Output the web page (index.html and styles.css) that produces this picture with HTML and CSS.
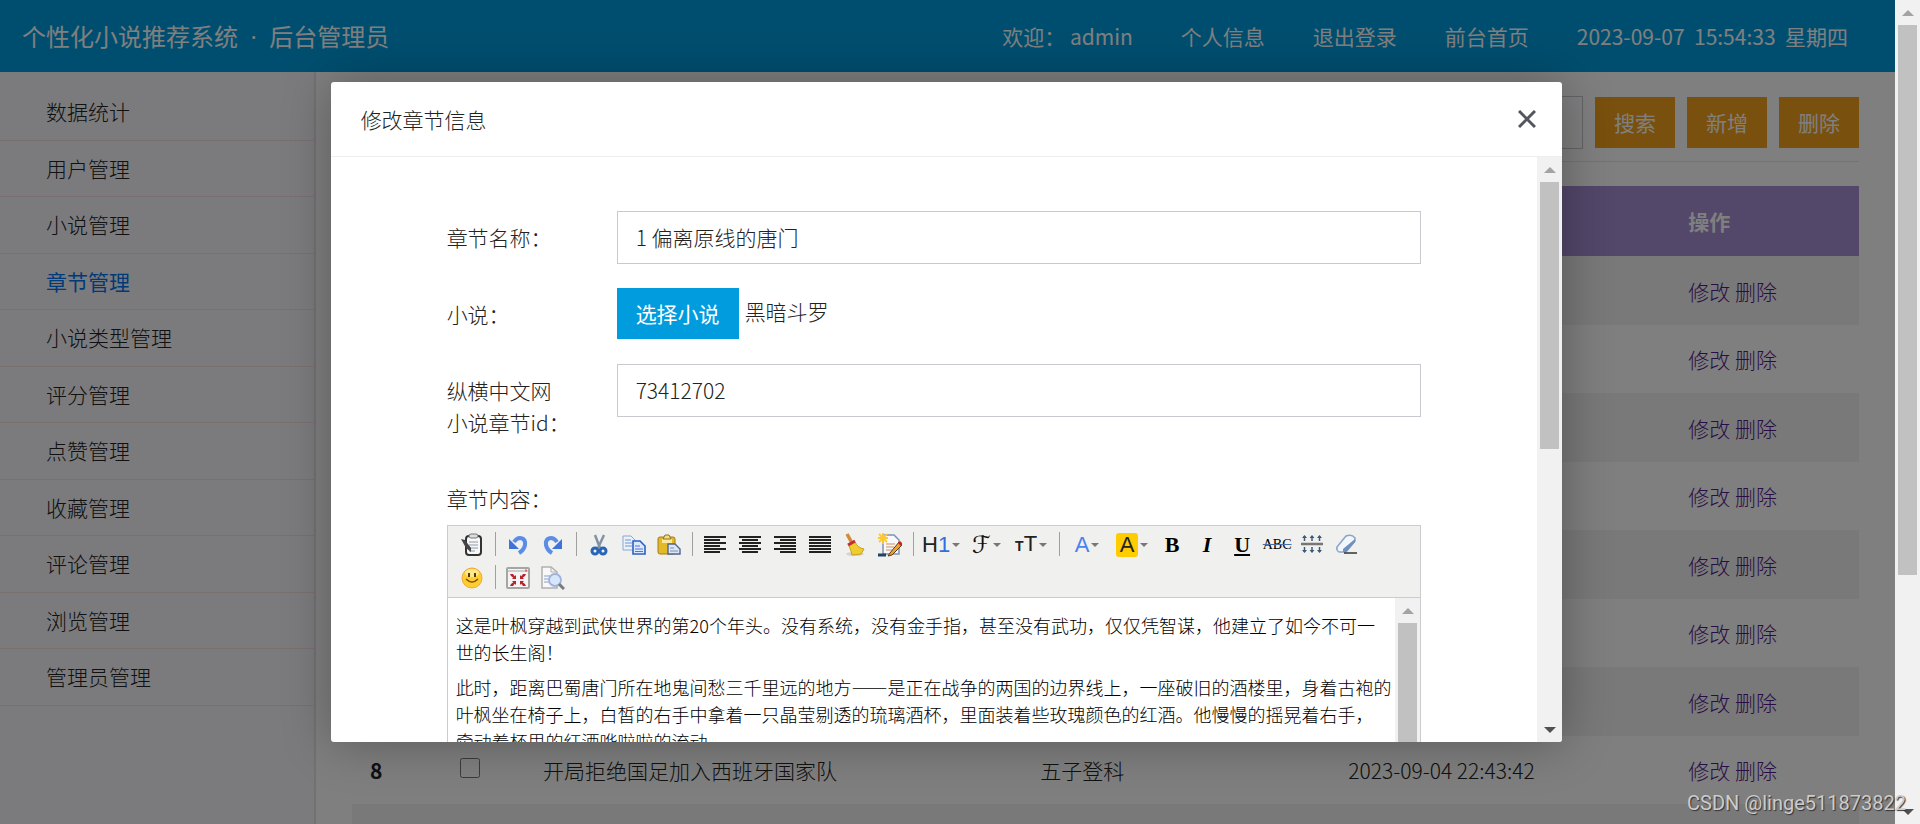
FILE: index.html
```html
<!DOCTYPE html>
<html lang="zh-CN">
<head>
<meta charset="utf-8">
<title>后台管理员</title>
<link rel="stylesheet" href="styles.css">
</head>
<body>
<div class="page">
  <header class="topbar">
    <div class="brand">个性化小说推荐系统<span class="dot">&nbsp;&nbsp;·&nbsp;&nbsp;</span>后台管理员</div>
    <nav class="topnav">
      <span>欢迎：&nbsp;admin</span>
      <a href="#">个人信息</a>
      <a href="#">退出登录</a>
      <a href="#">前台首页</a>
      <span>2023-09-07 &nbsp;15:54:33 &nbsp;星期四</span>
    </nav>
  </header>
  <div class="body">
    <nav class="side">
      <a href="#">数据统计</a>
      <a href="#">用户管理</a>
      <a href="#">小说管理</a>
      <a href="#" class="active">章节管理</a>
      <a href="#">小说类型管理</a>
      <a href="#">评分管理</a>
      <a href="#">点赞管理</a>
      <a href="#">收藏管理</a>
      <a href="#">评论管理</a>
      <a href="#">浏览管理</a>
      <a href="#">管理员管理</a>
    </nav>
    <main class="main">
      <div class="tools">
        <input class="field" type="text" aria-label="搜索">
        <button class="btn" type="button">搜索</button>
        <button class="btn" type="button">新增</button>
        <button class="btn" type="button">删除</button>
      </div>
      <table class="list">
        <colgroup><col class="c-no"><col class="c-check"><col class="c-name"><col class="c-novel"><col class="c-date"><col class="c-ops"></colgroup>
        <thead><tr><th></th><th></th><th></th><th></th><th></th><th>操作</th></tr></thead>
        <tbody>
          <tr><td></td><td></td><td></td><td></td><td></td><td><a href="#">修改</a> <a href="#">删除</a></td></tr>
          <tr><td></td><td></td><td></td><td></td><td></td><td><a href="#">修改</a> <a href="#">删除</a></td></tr>
          <tr><td></td><td></td><td></td><td></td><td></td><td><a href="#">修改</a> <a href="#">删除</a></td></tr>
          <tr><td></td><td></td><td></td><td></td><td></td><td><a href="#">修改</a> <a href="#">删除</a></td></tr>
          <tr><td></td><td></td><td></td><td></td><td></td><td><a href="#">修改</a> <a href="#">删除</a></td></tr>
          <tr><td></td><td></td><td></td><td></td><td></td><td><a href="#">修改</a> <a href="#">删除</a></td></tr>
          <tr><td></td><td></td><td></td><td></td><td></td><td><a href="#">修改</a> <a href="#">删除</a></td></tr>
          <tr><th scope="row">8</th><td><input type="checkbox" aria-label="8"></td><td>开局拒绝国足加入西班牙国家队</td><td>五子登科</td><td>2023-09-04 22:43:42</td><td><a href="#">修改</a> <a href="#">删除</a></td></tr>
          <tr><td></td><td></td><td></td><td></td><td></td><td></td></tr>
        </tbody>
      </table>
    </main>
  </div>
  <div class="shade"></div>
  <section class="modal" role="dialog" aria-labelledby="dialog-title">
    <div class="modal-head">
      <h2 id="dialog-title">修改章节信息</h2>
      <button type="button" class="close" aria-label="关闭"><svg width="18" height="18" viewBox="0 0 18 18"><path d="M1 1L17 17M17 1L1 17" stroke="#55555f" stroke-width="3"/></svg></button>
    </div>
    <div class="modal-body">
      <form class="form">
        <div class="row"><label for="name">章节名称：</label><input class="field" id="name" type="text" value="1 偏离原线的唐门"></div>
        <div class="row"><label for="pick">小说：</label><div class="pick"><button class="btn blue" id="pick" type="button">选择小说</button><span>黑暗斗罗</span></div></div>
        <div class="row"><label for="cid">纵横中文网小说章节id：</label><input class="field" id="cid" type="text" value="73412702"></div>
        <div class="content-label">章节内容：</div>
        <div class="editor">
          <div class="bar">
            <button type="button" class="ic" aria-label="模板"><svg viewBox="0 0 24 24"><rect x="6" y="3" width="15" height="19" rx="3" fill="#f8f8f8" stroke="#333" stroke-width="2"/><rect x="9" y="1" width="9" height="4" rx="2" fill="#ddd" stroke="#777"/><path d="M9 9h9M9 12h9M9 15h9M9 18h6" stroke="#8a9aaa"/><path d="M1 6l4 1 6 8v4l-5-4z" fill="#444"/></svg></button>
            <i class="sep"></i>
            <button type="button" class="ic" aria-label="后退"><svg viewBox="0 0 24 24"><path d="M8 9C12 3 20 4 19 12Q18 17 13 20" fill="none" stroke="#5b8ce6" stroke-width="4"/><path d="M3 6v10h10z" fill="#3f73dc"/></svg></button>
            <button type="button" class="ic" aria-label="前进"><svg viewBox="0 0 24 24"><path d="M16 9C12 3 4 4 5 12Q6 17 11 20" fill="none" stroke="#5b8ce6" stroke-width="4"/><path d="M21 6v10H11z" fill="#3f73dc"/></svg></button>
            <i class="sep"></i>
            <button type="button" class="ic" aria-label="剪切"><svg viewBox="0 0 24 24"><path d="M8 2l5 13M17 2l-6 13" stroke="#8293a5" stroke-width="2.5"/><circle cx="8" cy="18" r="3" fill="none" stroke="#2866b5" stroke-width="3"/><circle cx="16" cy="18" r="3" fill="none" stroke="#2866b5" stroke-width="3"/></svg></button>
            <button type="button" class="ic" aria-label="复制"><svg viewBox="0 0 24 24"><path d="M1 3h8l4 4v10H1z" fill="#eaf1fb" stroke="#8aa6d6"/><path d="M3 7h6M3 10h7M3 13h7" stroke="#6c94d8"/><path d="M11 8h7l5 5v8H11z" fill="#dce8ff" stroke="#2c5fc4" stroke-width="1.6"/><path d="M13 13h5M13 16h8M13 18.500h8" stroke="#4679d8"/></svg></button>
            <button type="button" class="ic" aria-label="粘贴"><svg viewBox="0 0 24 24"><rect x="1" y="4" width="17" height="17" rx="2" fill="#e3b928" stroke="#a57c12"/><rect x="5" y="6" width="10" height="4" fill="#f8e8a0"/><path d="M6 6l2-4h4l2 4z" fill="#f5de82" stroke="#8a701c"/><path d="M11 11h7l5 5v5H11z" fill="#dde5f2" stroke="#50668c" stroke-width="1.4"/><path d="M13 15h4M13 18h8" stroke="#7a91b8"/></svg></button>
            <i class="sep"></i>
            <button type="button" class="ic" aria-label="左对齐"><svg viewBox="0 0 24 24"><path d="M1 4h22M1 7h16M1 10h22M1 13h16M1 16h22M1 19h16" stroke="#222" stroke-width="1.8"/></svg></button>
            <button type="button" class="ic" aria-label="居中"><svg viewBox="0 0 24 24"><path d="M1 4h22M4 7h16M1 10h22M4 13h16M1 16h22M4 19h16" stroke="#222" stroke-width="1.8"/></svg></button>
            <button type="button" class="ic" aria-label="右对齐"><svg viewBox="0 0 24 24"><path d="M1 4h22M7 7h16M1 10h22M7 13h16M1 16h22M7 19h16" stroke="#222" stroke-width="1.8"/></svg></button>
            <button type="button" class="ic" aria-label="两端对齐"><svg viewBox="0 0 24 24"><path d="M1 4h22M1 7h22M1 10h22M1 13h22M1 16h22M1 19h22" stroke="#222" stroke-width="1.8"/></svg></button>
            <button type="button" class="ic" aria-label="清理"><svg viewBox="0 0 24 24"><ellipse cx="12" cy="21" rx="9" ry="2" fill="#d4d4d2"/><path d="M4 1l5 9" stroke="#d48a3c" stroke-width="3.500"/><path d="M6 13l6-4q3 6 9 7l-3 5-9 1q-1-5-3-9z" fill="#f0cd2f" stroke="#c9a11c"/><path d="M5 12l7-4" stroke="#c32f2f" stroke-width="3"/></svg></button>
            <button type="button" class="ic" aria-label="排版"><svg viewBox="0 0 24 24"><path d="M5 2h11l5 5v14H5z" fill="#f8f8fa" stroke="#7d93b5" stroke-width="1.500"/><path d="M8 11h9M8 14h8M8 17h6" stroke="#d08a5c"/><path d="M5 0v11M0 5h10M1 1l8 8M9 1l-8 8" stroke="#ffc832" stroke-width="1.800"/><path d="M0 22h8" stroke="#26415f" stroke-width="3"/><path d="M12 20L21 9l3 3-10 10-4 1z" fill="#eaa52f" stroke="#5c3b22"/><path d="M21 9l3 3" stroke="#c22" stroke-width="3"/></svg></button>
            <i class="sep"></i>
            <button type="button" class="wide" aria-label="段落"><span class="t-sans">H<b>1</b></span><i class="caret"></i></button>
            <button type="button" class="wide" aria-label="字体"><span class="t-script">ℱ</span><i class="caret"></i></button>
            <button type="button" class="wide" aria-label="文字大小"><span class="t-sans"><small>T</small>T</span><i class="caret"></i></button>
            <i class="sep"></i>
            <button type="button" class="wide" aria-label="文字颜色"><span class="t-sans t-blue">A</span><i class="caret"></i></button>
            <button type="button" class="wide" aria-label="文字背景"><span class="t-sans t-mark">A</span><i class="caret"></i></button>
            <button type="button" class="ic t-serif" aria-label="粗体"><b>B</b></button>
            <button type="button" class="ic t-serif" aria-label="斜体"><b><em>I</em></b></button>
            <button type="button" class="ic t-serif" aria-label="下划线"><b><u>U</u></b></button>
            <button type="button" class="ic t-strike" aria-label="删除线"><s>ABC</s></button>
            <button type="button" class="ic" aria-label="行距"><svg viewBox="0 0 24 24"><path d="M1 11h22" stroke="#777" stroke-width="2.500"/><path d="M4.500 3v5M12 3v5M19.500 3v5M4.500 14v5M12 14v5M19.500 14v5" stroke="#3c5a7c" stroke-width="1.500"/><path d="M2 5l2.500-3 2.500 3zM9.500 5l2.500-3 2.500 3zM17 5l2.500-3 2.500 3zM2 17l2.500 3 2.500-3zM9.500 17l2.500 3 2.500-3zM17 17l2.500 3 2.500-3z" fill="#3c5a7c"/></svg></button>
            <button type="button" class="ic" aria-label="删除格式"><svg viewBox="0 0 24 24"><path d="M2 14L11 3q6-2 9 2v3L11 19H4q-3-2-2-5z" fill="#f2f6fd" stroke="#8ba3cc" stroke-width="1.500"/><path d="M20 6v3l-9 10H8v-3z" fill="#6f8fc0"/><path d="M9 20h13" stroke="#333" stroke-width="1.500"/></svg></button>
            <i class="line-end"></i>
            <button type="button" class="ic" aria-label="表情"><svg viewBox="0 0 24 24"><circle cx="12" cy="12" r="10" fill="#ffcd2e" stroke="#f0a93a"/><ellipse cx="12" cy="7" rx="7" ry="4" fill="#ffe78a"/><path d="M9 7v4M15 7v4" stroke="#4d3a10" stroke-width="2"/><path d="M6 13q6 6 12 0" fill="none" stroke="#7a4e10" stroke-width="1.500"/></svg></button>
            <i class="sep"></i>
            <button type="button" class="ic" aria-label="全屏"><svg viewBox="0 0 24 24"><rect x="1" y="2" width="22" height="20" rx="1" fill="#f4f4f4" stroke="#a5a5a5" stroke-width="2"/><path d="M2 5h20" stroke="#ccc" stroke-width="2"/><path d="M19 4.500h2" stroke="#d66" stroke-width="2"/><path d="M4 8l3 0 3 4-1 1-4-3zM20 8h-3l-3 4 1 1 4-3zM4 20h3l3-4-1-1-4 3zM20 20h-3l-3-4 1-1 4 3z" fill="#b8232b"/><path d="M10 9v4H6zM14 9v4h4zM10 19v-4H6zM14 19v-4h4z" fill="#b8232b"/></svg></button>
            <button type="button" class="ic" aria-label="预览"><svg viewBox="0 0 24 24"><path d="M1 1h9l6 5v16H1z" fill="#f8f8f8" stroke="#b0b0b0" stroke-width="1.500"/><path d="M10 1v5h6" fill="none" stroke="#b0b0b0"/><path d="M3 10h6M3 13h5M3 16h6" stroke="#8ba0c8"/><circle cx="14" cy="14" r="6" fill="#d6e6fb" stroke="#9fb3da" stroke-width="1.800"/><path d="M18 18l5 5" stroke="#7a7a80" stroke-width="3"/></svg></button>
          </div>
          <div class="doc">
            <div class="text">
              <p>这是叶枫穿越到武侠世界的第20个年头。没有系统，没有金手指，甚至没有武功，仅仅凭智谋，他建立了如今不可一<br>世的长生阁！</p>
              <p>此时，距离巴蜀唐门所在地鬼间愁三千里远的地方——是正在战争的两国的边界线上，一座破旧的酒楼里，身着古袍的叶枫坐在椅子上，白皙的右手中拿着一只晶莹剔透的琉璃酒杯，里面装着些玫瑰颜色的红酒。他慢慢的摇晃着右手，<br>牵动着杯里的红酒哗啦啦的流动。</p>
            </div>
            <div class="scroll"><i class="up"></i><i class="thumb full"></i></div>
          </div>
        </div>
      </form>
      <div class="scroll"><i class="up"></i><i class="track"><i class="thumb form-thumb"></i></i><i class="down"></i></div>
    </div>
  </section>
</div>
<div class="scroll"><i class="up"></i><i class="track"><i class="thumb page-thumb"></i></i><i class="down"></i></div>
<div class="mark">CSDN @linge511873822</div>
</body>
</html>
```
FILE: styles.css
```css
*{box-sizing:border-box}
body{margin:0;height:100vh;display:flex;overflow:hidden;position:relative;background:#fff;color:#222;font:21px/32px "Noto Sans CJK SC",sans-serif;font-weight:300}
a{color:inherit;text-decoration:none}
button,input{font:inherit;color:inherit;border-radius:0}
button{border:0;padding:0;background:none}
.page{flex:1;min-width:0;position:relative;display:flex;flex-direction:column;overflow:hidden}

.topbar{flex:none;height:72px;padding:0 47px 0 22px;display:flex;align-items:center;justify-content:space-between;background:#009cde;color:#fff;font-weight:400}
.brand{font-size:24px}
.dot{font-family:"Open Sans",sans-serif}
.topnav{display:flex;gap:48px}

.body{flex:1;min-height:0;display:flex}
.side{flex:none;width:316px;padding-top:12px;background:#f7f7fb;border-right:2px solid #e4e4e8;display:flex;flex-direction:column}
.side a{flex:none;height:57px;padding-left:46px;line-height:54px;border-bottom:1px solid #f6e0e0}
.side a:nth-child(even){height:56px}
.side .active{color:#0074f0;font-weight:400}
.main{flex:1;min-width:0;padding:24px 36px 0}
.tools{display:flex;justify-content:flex-end;align-items:center;gap:12px;padding-bottom:12px;margin-bottom:24px;border-bottom:1px solid #e6e6e6}
.field{height:53px;padding:0 18px 2px;border:1px solid #c9c9d0;background:#fff}
.btn{height:51px;padding:0 19px 2px;background:#f3a11a;color:#fff;font-weight:400}
.btn.blue{background:#009cde}

.list{width:100%;table-layout:fixed;border-collapse:collapse}
.list th,.list td{height:68px;padding:0 18px;text-align:left;white-space:nowrap}
.list thead th{height:70px;background:#a68ed4;color:#fff}
.list tbody tr:nth-child(odd){background:#f2f2f2}
.list tbody tr:nth-child(odd) td{height:69px}
.list a{color:#551a8b}
.list input{display:block;width:20px;height:20px;margin:0 0 4px}
.c-no{width:90px}
.c-check{width:83px}
.c-name{width:33%}
.c-novel{width:308px}
.c-date{width:340px}

.shade{position:absolute;inset:0;background:rgba(0,0,0,.5)}
.modal{position:absolute;top:10vh;left:calc(17.5% - 1px);width:65%;height:80vh;display:flex;flex-direction:column;overflow:hidden;border-radius:3px;background:#fff;box-shadow:1px 1px 50px rgba(0,0,0,.3)}
.modal-head{flex:none;height:75px;padding:0 26px 0 30px;display:flex;align-items:center;justify-content:space-between;border-bottom:1px solid #eee}
.modal-head h2{margin:0;font-size:21px;font-weight:inherit}
.close{display:flex}
.modal-body{flex:1;min-height:0;display:flex}
.form{flex:1;min-width:0;padding:54px 116px 0;overflow:hidden}
.row{display:flex;align-items:flex-start;margin-bottom:24px}
.row label{flex:none;width:170px;padding:10px 45px 1px 0}
.row .field{flex:1;min-width:0}
.pick{height:52px;display:flex;align-items:flex-start;gap:6px}
.pick span{line-height:46px}
.content-label{padding:19px 0 11px}

.editor{border:1px solid #ccc}
.bar{display:flex;flex-wrap:wrap;padding:2px 7px 3px;background:#f0f0ee;border-bottom:1px solid #ccc}
.ic,.wide{width:35px;height:33px;display:flex;align-items:center;justify-content:center;color:#111}
.ic svg{width:24px;height:24px}
.wide{width:45px;gap:2px}
.sep{width:11px;height:24px;margin:4px 0;border-left:5px solid #f0f0ee;border-right:5px solid #f0f0ee;background:#a0a0a0}
.line-end{flex-basis:100%}
.caret{border:4px solid transparent;border-top-color:#777;border-bottom:0}
.t-sans{font:22px/24px "Liberation Sans",sans-serif;color:#222}
.t-sans b{font-weight:400;color:#2f6fe0}
.t-sans small{font-size:14px;font-weight:700}
.t-sans.t-blue{color:#4a82ee}
.t-sans.t-mark{width:22px;background:#fc0;border-radius:3px;text-align:center}
.t-script{font:24px/24px "DejaVu Sans",sans-serif}
.t-serif{font:22px/24px "Liberation Serif",serif;color:#000}
.t-strike{font:14px/24px "Liberation Serif",serif;color:#000}
.t-strike s{text-decoration-color:#4a6ea8}
.doc{height:320px;display:flex}
.text{flex:1;min-width:0;padding:14px 0 0 8px;color:#000;font-size:18px;line-height:27px}
.text p{margin:0 0 8px}

.scroll{flex:none;width:25px;padding:0 3px;display:flex;flex-direction:column;align-items:center;background:#f1f1f1}
.scroll .up,.scroll .down{flex:none;margin:10px 0 9px;border:6px solid transparent;border-top:0;border-bottom-color:#a3a3a3}
.scroll .down{border-top:6px solid #505050;border-bottom:0}
.track{flex:1;width:100%}
.thumb{display:block;width:100%;background:#c1c1c1}
.thumb.full{flex:1}
.form-thumb{height:50%}
.page-thumb{height:71%}
.mark{position:absolute;right:14px;bottom:5px;font:20px/32px Roboto,sans-serif;color:#ccc;text-shadow:1px 1px 1px #333}
```
